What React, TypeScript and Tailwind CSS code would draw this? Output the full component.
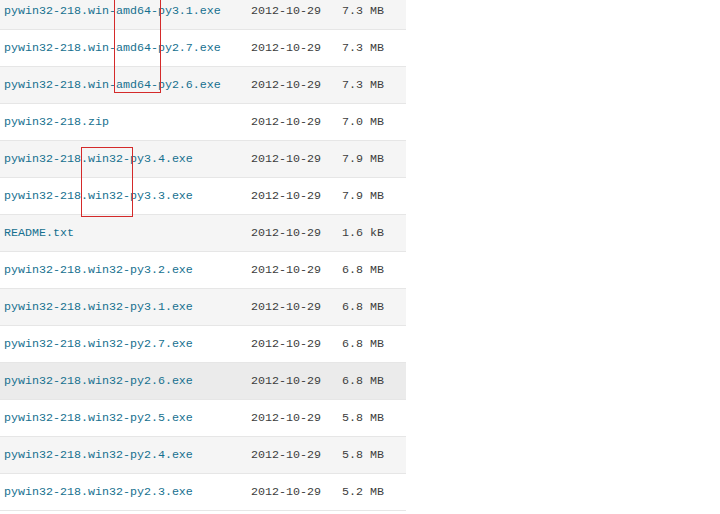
import React from "react";

interface FileRow {
  name: string;
  date: string;
  size: string;
  shade: "gray" | "white" | "hover";
}

const rows: FileRow[] = [
  { name: "pywin32-218.win-amd64-py3.1.exe", date: "2012-10-29", size: "7.3 MB", shade: "gray" },
  { name: "pywin32-218.win-amd64-py2.7.exe", date: "2012-10-29", size: "7.3 MB", shade: "white" },
  { name: "pywin32-218.win-amd64-py2.6.exe", date: "2012-10-29", size: "7.3 MB", shade: "gray" },
  { name: "pywin32-218.zip", date: "2012-10-29", size: "7.0 MB", shade: "white" },
  { name: "pywin32-218.win32-py3.4.exe", date: "2012-10-29", size: "7.9 MB", shade: "gray" },
  { name: "pywin32-218.win32-py3.3.exe", date: "2012-10-29", size: "7.9 MB", shade: "white" },
  { name: "README.txt", date: "2012-10-29", size: "1.6 kB", shade: "gray" },
  { name: "pywin32-218.win32-py3.2.exe", date: "2012-10-29", size: "6.8 MB", shade: "white" },
  { name: "pywin32-218.win32-py3.1.exe", date: "2012-10-29", size: "6.8 MB", shade: "gray" },
  { name: "pywin32-218.win32-py2.7.exe", date: "2012-10-29", size: "6.8 MB", shade: "white" },
  { name: "pywin32-218.win32-py2.6.exe", date: "2012-10-29", size: "6.8 MB", shade: "hover" },
  { name: "pywin32-218.win32-py2.5.exe", date: "2012-10-29", size: "5.8 MB", shade: "white" },
  { name: "pywin32-218.win32-py2.4.exe", date: "2012-10-29", size: "5.8 MB", shade: "gray" },
  { name: "pywin32-218.win32-py2.3.exe", date: "2012-10-29", size: "5.2 MB", shade: "white" },
];

const shadeClass: Record<FileRow["shade"], string> = {
  gray: "bg-[#f5f5f5]",
  white: "bg-white",
  hover: "bg-[#ebebeb]",
};

export default function App() {
  return (
    <div className="relative h-[514px] w-[720px] overflow-hidden bg-white font-['Liberation_Mono',monospace] text-[11.67px]">
      <div className="-mt-[7px] w-[406px]">
        {rows.map((r) => (
          <div
            key={r.name}
            className={`grid h-[37px] grid-cols-[247px_91px_1fr] items-center border-b border-[#e6e6e6] pl-[4px] pt-[2px] ${shadeClass[r.shade]}`}
          >
            <a className="text-[#16708f]">{r.name}</a>
            <span className="text-[#3d3d3d]">{r.date}</span>
            <span className="text-[#3d3d3d]">{r.size}</span>
          </div>
        ))}
      </div>
      {/* red markers over the screenshot */}
      <div className="absolute left-[114px] top-[-2px] h-[95px] w-[47px] border border-[#d42a2a]" />
      <div className="absolute left-[81px] top-[147px] h-[70px] w-[52px] border border-[#d42a2a]" />
    </div>
  );
}
